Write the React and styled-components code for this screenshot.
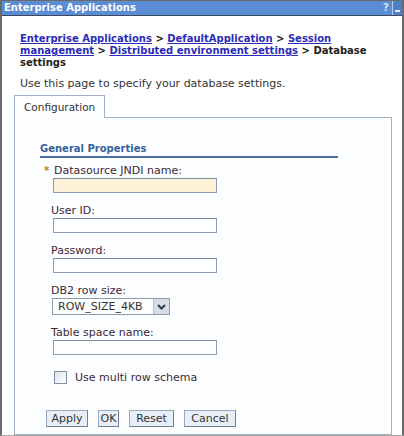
import React from "react";
import styled, { createGlobalStyle } from "styled-components";

const GlobalStyle = createGlobalStyle`
  html, body {
    margin: 0;
    padding: 0;
    background: #ffffff;
  }
  body {
    font-family: "DejaVu Sans", Verdana, sans-serif;
    color: #333333;
  }
`;

const Window = styled.div`
  width: 404px;
  height: 436px;
  box-sizing: border-box;
  border-style: solid;
  border-color: #6a6a6a;
  border-width: 1px 2px 1px 2px;
  border-bottom-color: #a9a9a9;
  background: #ffffff;
  display: flex;
  flex-direction: column;
  overflow: hidden;
`;

const TitleBar = styled.div`
  height: 14px;
  flex: none;
  background: #5a8dd4;
  border-bottom: 1px solid #3d4a60;
  display: flex;
  align-items: stretch;
  justify-content: space-between;
`;

const TitleText = styled.span`
  padding-left: 2px;
  font-size: 10px;
  font-weight: bold;
  line-height: 14px;
  color: #ffffff;
`;

const TitleTools = styled.div`
  display: flex;
  align-items: stretch;
`;

const HelpMark = styled.span`
  width: 10px;
  font-size: 10px;
  font-weight: bold;
  line-height: 14px;
  color: #d9e5f6;
  text-align: center;
`;

// minimise box, the bar is drawn by ::after
const MinBox = styled.span`
  width: 9px;
  margin-left: 1px;
  border-left: 1px solid #b9cdea;
  background: #4c7fc8;
  position: relative;
  &::after {
    content: "";
    position: absolute;
    left: 2px;
    right: 2px;
    bottom: 3px;
    height: 2px;
    background: #e3ecf8;
  }
`;

const Content = styled.div`
  flex: 1;
  padding: 17px 10px 0 12px;
  display: flex;
  flex-direction: column;
`;

const Breadcrumb = styled.div`
  width: 368px;
  margin-left: 6px;
  font-size: 10px;
  font-weight: bold;
  line-height: 12px;
  color: #222222;
`;

const Crumb = styled.a`
  color: #2b2bb8;
  text-decoration: underline;
`;

const Description = styled.p`
  margin: 9px 0 0 6px;
  font-size: 11px;
  line-height: 12px;
  color: #333333;
`;

const TabStrip = styled.div`
  margin-top: 5px;
  display: flex;
  align-items: flex-end;
`;

const Tab = styled.div`
  height: 22px;
  padding: 0 9px;
  border: 1px solid #9fb1cc;
  border-bottom: none;
  background: #ffffff;
  font-size: 10.5px;
  line-height: 22px;
  color: #333333;
`;

const TabFill = styled.div`
  flex: 1;
  border-bottom: 1px solid #9fb1cc;
`;

const Panel = styled.div`
  flex: 1;
  border: 1px solid #9fb1cc;
  border-top: none;
  background: #fcfdff;
  padding: 25px 0 0 25px;
`;

const SectionHeading = styled.h3`
  width: 298px;
  margin: 0;
  padding-bottom: 1px;
  border-bottom: 2px solid #4a6e9e;
  font-size: 10px;
  font-weight: bold;
  line-height: 12px;
  color: #36629c;
`;

const Fields = styled.div`
  margin-top: 7px;
  padding-left: 11px;
  display: flex;
  flex-direction: column;
  gap: 12px;
`;

const Field = styled.div`
  display: flex;
  flex-direction: column;
  align-items: flex-start;
  gap: 1px;
`;

const Label = styled.label`
  margin-left: ${(p) => (p.required ? "-7px" : "0")};
  font-size: 11px;
  line-height: 12px;
  color: #3a2a38;
  display: flex;
  align-items: center;
  gap: 3px;
`;

const Star = styled.span`
  width: 7px;
  color: #a08a1a;
  font-weight: bold;
  font-size: 10px;
`;

const TextInput = styled.input`
  box-sizing: border-box;
  width: 164px;
  height: 15px;
  margin: 0 0 0 2px;
  padding: 0 3px;
  border: 1px solid #8a9cb6;
  border-top-color: #7a8aa0;
  background: ${(p) => (p.required ? "#fdf2d8" : "#ffffff")};
  font-family: inherit;
  font-size: 11px;
  outline: none;
`;

const Select = styled.div`
  box-sizing: border-box;
  width: 118px;
  height: 17px;
  margin-left: 1px;
  border: 1px solid #8f9cae;
  background: #ffffff;
  display: flex;
  align-items: stretch;
`;

const SelectValue = styled.span`
  flex: 1;
  padding-left: 5px;
  font-size: 11px;
  line-height: 15px;
  color: #333333;
`;

const SelectArrow = styled.span`
  width: 15px;
  border-left: 1px solid #b6c0cc;
  background: #d7dde6;
  display: flex;
  align-items: center;
  justify-content: center;
`;

const CheckRow = styled.label`
  margin: 4px 0 0 3px;
  display: flex;
  align-items: center;
  gap: 8px;
  font-size: 11px;
  line-height: 13px;
  color: #3a2a38;
`;

const CheckBox = styled.span`
  box-sizing: border-box;
  width: 13px;
  height: 13px;
  border: 1px solid #7d8ea6;
  background: linear-gradient(135deg, #dfe4ec, #ffffff);
`;

const ButtonBar = styled.div`
  margin: 26px 0 0 6px;
  display: flex;
  gap: 10px;
`;

const Button = styled.button`
  box-sizing: border-box;
  width: ${(p) => p.w}px;
  height: 17px;
  padding: 0;
  border: 1px solid #9aa9bf;
  border-right-color: #6f7f96;
  border-bottom-color: #6f7f96;
  background: #e7eef8;
  font-family: inherit;
  font-size: 11px;
  line-height: 15px;
  text-align: center;
  color: #333333;
`;

const TextField = ({ label, required }) => (
  <Field>
    <Label required={required}>
      {required && <Star>*</Star>}
      {label}
    </Label>
    <TextInput required={required} />
  </Field>
);

export default function App() {
  return (
    <>
      <GlobalStyle />
      <Window>
        <TitleBar>
          <TitleText>Enterprise Applications</TitleText>
          <TitleTools>
            <HelpMark>?</HelpMark>
            <MinBox />
          </TitleTools>
        </TitleBar>
        <Content>
          <Breadcrumb>
            <Crumb>Enterprise Applications</Crumb> &gt;{" "}
            <Crumb>DefaultApplication</Crumb> &gt; <Crumb>Session management</Crumb>{" "}
            &gt; <Crumb>Distributed environment settings</Crumb> &gt; Database settings
          </Breadcrumb>
          <Description>Use this page to specify your database settings.</Description>
          <TabStrip>
            <Tab>Configuration</Tab>
            <TabFill />
          </TabStrip>
          <Panel>
            <SectionHeading>General Properties</SectionHeading>
            <Fields>
              <TextField label="Datasource JNDI name:" required />
              <TextField label="User ID:" />
              <TextField label="Password:" />
              <Field>
                <Label>DB2 row size:</Label>
                <Select>
                  <SelectValue>ROW_SIZE_4KB</SelectValue>
                  <SelectArrow>
                    <svg width="9" height="6" viewBox="0 0 9 6">
                      <path d="M1 1 L4.5 4.5 L8 1" fill="none" stroke="#2c3a52" strokeWidth="2" />
                    </svg>
                  </SelectArrow>
                </Select>
              </Field>
              <TextField label="Table space name:" />
              <CheckRow>
                <CheckBox />
                Use multi row schema
              </CheckRow>
            </Fields>
            <ButtonBar>
              <Button w={42}>Apply</Button>
              <Button w={21}>OK</Button>
              <Button w={45}>Reset</Button>
              <Button w={52}>Cancel</Button>
            </ButtonBar>
          </Panel>
        </Content>
      </Window>
    </>
  );
}
